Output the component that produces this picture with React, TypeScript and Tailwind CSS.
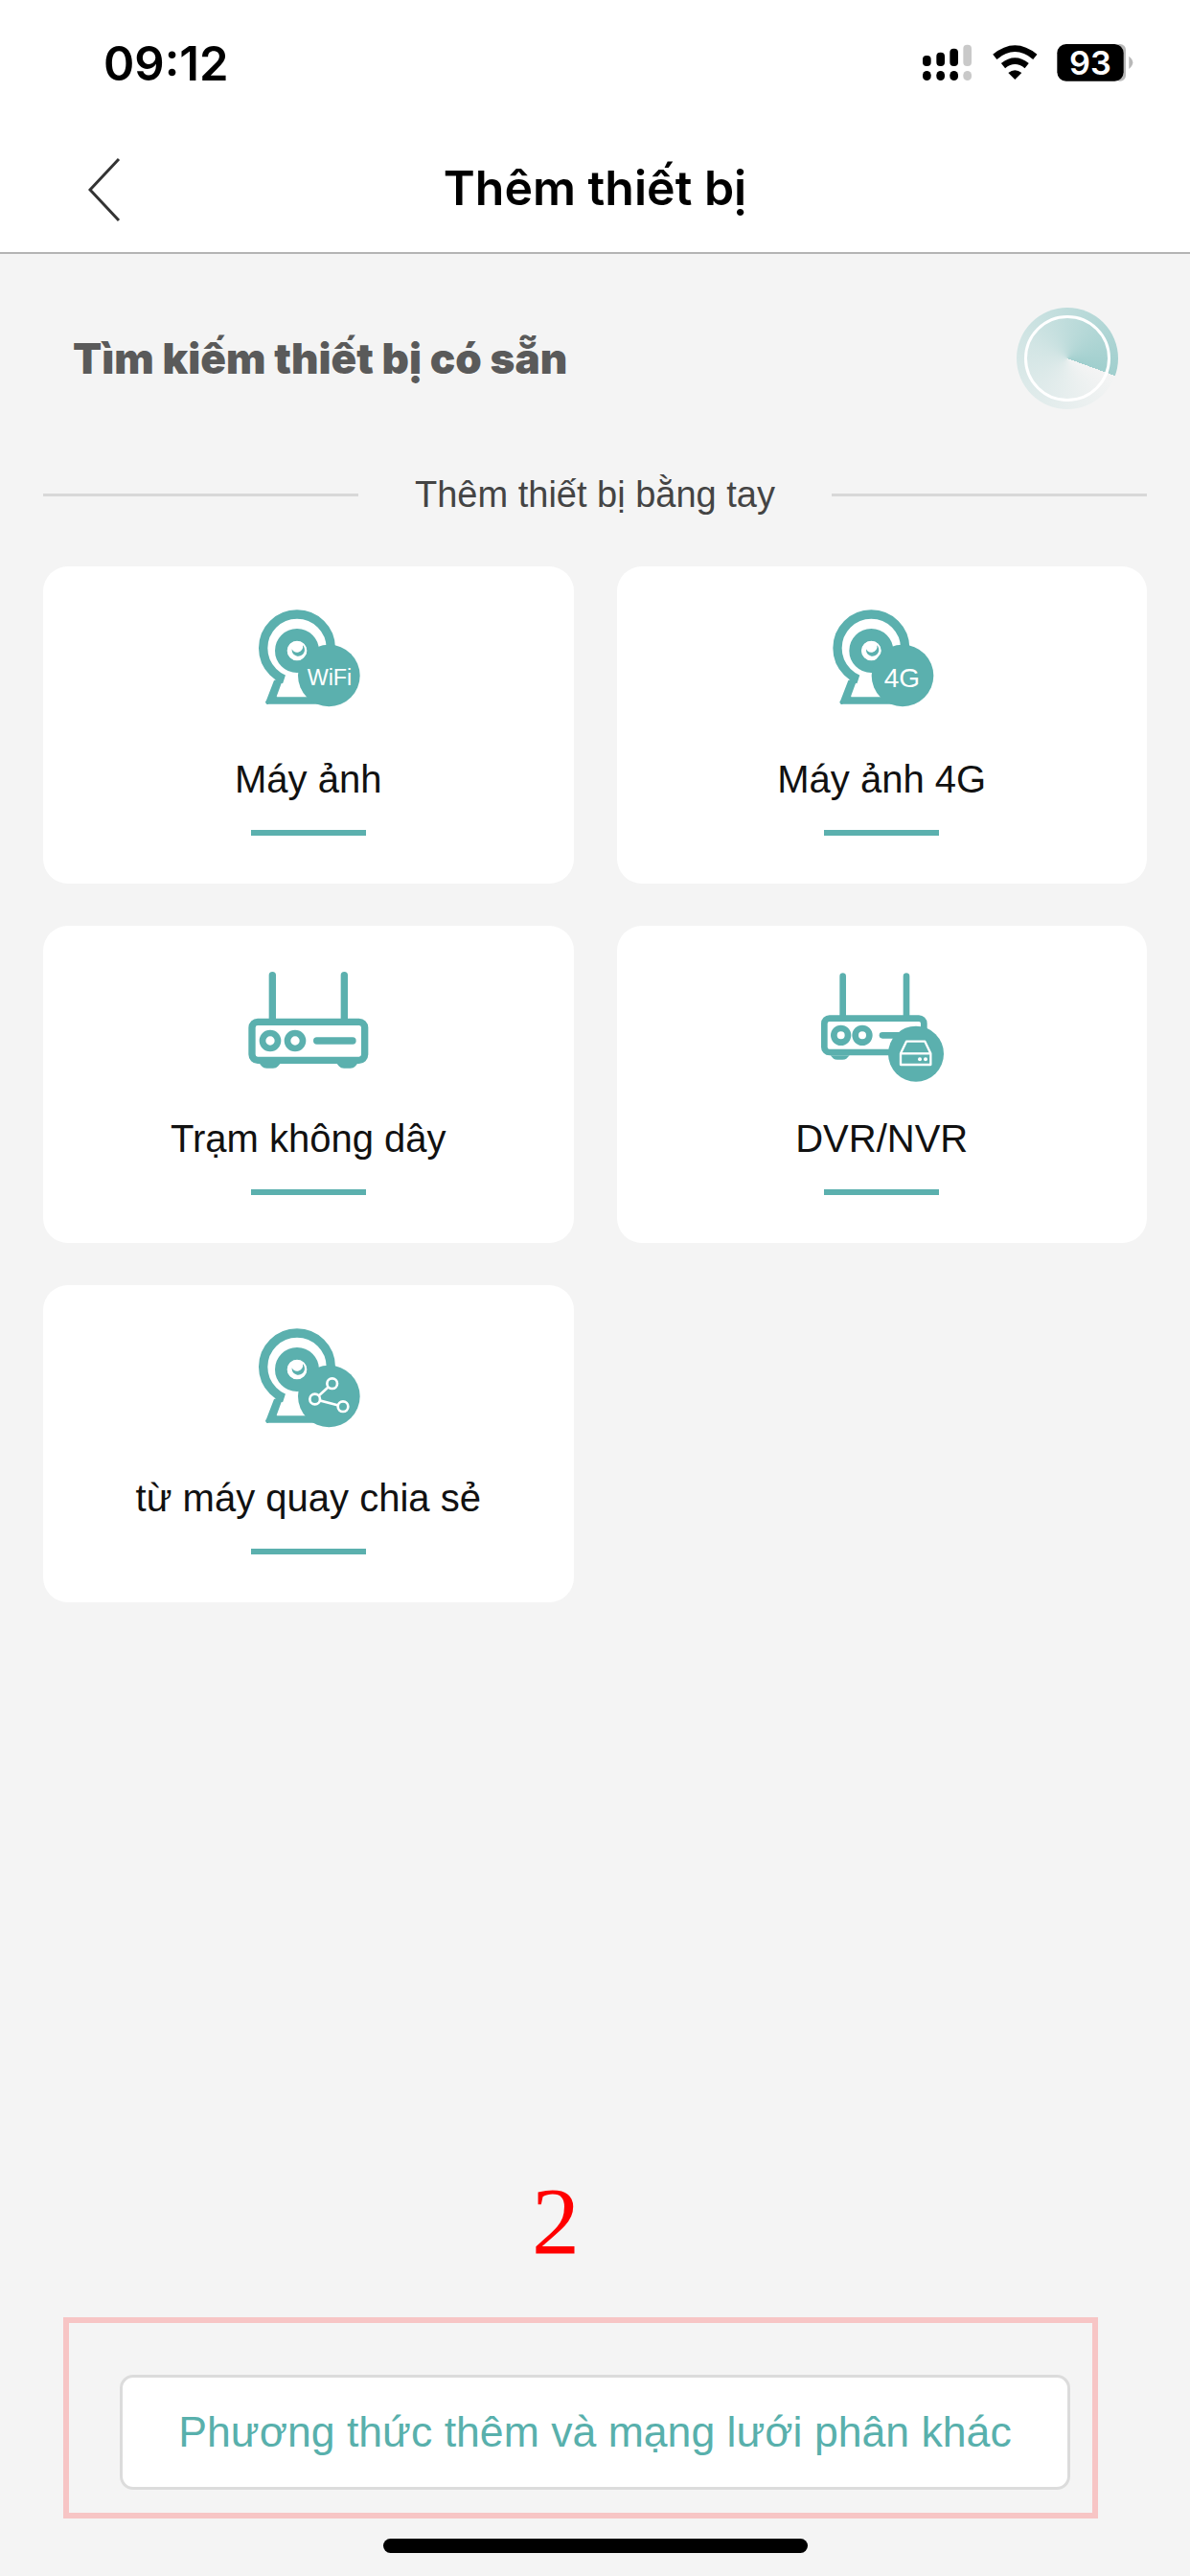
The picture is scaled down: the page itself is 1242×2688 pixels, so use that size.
import React from "react";

const TEAL = "#5bb0ae";

function Camera() {
  return (
    <g>
      <circle cx="240" cy="199" r="106" fill="none" stroke={TEAL} strokeWidth="28" />
      <circle cx="240" cy="207" r="50" fill="none" stroke={TEAL} strokeWidth="38" />
      <circle cx="240" cy="207" r="30" fill="#fff" />
      <path d="M224 202a20 20 0 1 0 34-12a18 18 0 0 1-15 22a18 18 0 0 1-19-10z" fill={TEAL} />
      <path d="M168 300L144 362a7 7 0 0 0 7 12H330V350H176L198 290z" fill={TEAL} />
      <path d="M205 280Q190 330 177 352H275L250 280z" fill="#fff" />
    </g>
  );
}

function Frame({ x, children }: { x: number; children: React.ReactNode }) {
  return (
    <svg width="200" height="150" viewBox={`${x} 0 600 450`} className="block">
      {children}
    </svg>
  );
}

function Badge({ cx = 340, cy = 285, r = 97 }: { cx?: number; cy?: number; r?: number }) {
  return <circle cx={cx} cy={cy} r={r} fill={TEAL} />;
}

function WifiIcon() {
  return (
    <Frame x={-24}>
      <Camera />
      <Badge />
      <text x="342" y="314" textAnchor="middle" fill="#fff" fontSize="70" fontFamily="'Liberation Sans', sans-serif">WiFi</text>
    </Frame>
  );
}

function FourGIcon() {
  return (
    <Frame x={-28}>
      <Camera />
      <Badge cx={338} />
      <text x="336" y="320" textAnchor="middle" fill="#fff" fontSize="84" fontFamily="'Liberation Sans', sans-serif">4G</text>
    </Frame>
  );
}

function ShareIcon() {
  return (
    <Frame x={-24}>
      <Camera />
      <Badge cy={291} />
      <path d="M350 251L296 300L384 323" fill="none" stroke="#fff" strokeWidth="8" />
      <circle cx="350" cy="251" r="16" fill={TEAL} stroke="#fff" strokeWidth="8" />
      <circle cx="296" cy="300" r="16" fill={TEAL} stroke="#fff" strokeWidth="8" />
      <circle cx="384" cy="323" r="16" fill={TEAL} stroke="#fff" strokeWidth="8" />
    </Frame>
  );
}

function RouterIcon() {
  return (
    <svg width="200" height="150" viewBox="-24 -21 600 450" className="block">
      <g fill="none" stroke={TEAL} strokeLinecap="round">
        <path d="M163 77V220M388 77V220" strokeWidth="22" />
        <rect x="99" y="223" width="353" height="120" rx="18" strokeWidth="22" />
        <circle cx="156" cy="282" r="24" strokeWidth="20" />
        <circle cx="234" cy="282" r="24" strokeWidth="20" />
        <path d="M302 282H414" strokeWidth="22" />
      </g>
      <path d="M120 350H190L180 362Q175 368 165 368H145Q135 368 130 362zM362 350H432L422 362Q417 368 407 368H387Q377 368 372 362z" fill={TEAL} />
    </svg>
  );
}

function DvrIcon() {
  return (
    <svg width="200" height="150" viewBox="-28 -21 600 450" className="block">
      <g fill="none" stroke={TEAL} strokeLinecap="round">
        <path d="M151 80V208M350 80V208" strokeWidth="20" />
        <rect x="93" y="212" width="312" height="106" rx="16" strokeWidth="20" />
        <circle cx="145" cy="265" r="22" strokeWidth="20" />
        <circle cx="212" cy="265" r="22" strokeWidth="20" />
        <path d="M275 265H340" strokeWidth="20" />
      </g>
      <path d="M112 328H172L162 338Q158 341 150 341H134Q126 341 122 338z" fill={TEAL} />
      <circle cx="380" cy="323" r="87" fill={TEAL} />
      <g fill="none" stroke="#fff" strokeWidth="7" strokeLinejoin="round">
        <path d="M332 322L350 284H408L426 322V357H332z" />
        <path d="M332 322H426" />
      </g>
      <circle cx="392" cy="340" r="6" fill="#fff" />
      <circle cx="410" cy="340" r="6" fill="#fff" />
    </svg>
  );
}

function StatusIcons() {
  return (
    <svg width="280" height="90" viewBox="0 0 840 270" className="block">
      <g fill="#000">
        <rect x="87" y="120" width="26" height="33" rx="12" />
        <rect x="130" y="110" width="26" height="43" rx="12" />
        <rect x="172" y="98" width="26" height="55" rx="12" />
        <rect x="87" y="168" width="26" height="30" rx="13" />
        <rect x="130" y="168" width="26" height="30" rx="13" />
        <rect x="172" y="168" width="26" height="30" rx="13" />
      </g>
      <rect x="214" y="86" width="26" height="67" rx="12" fill="#c9c9c9" />
      <rect x="214" y="168" width="26" height="30" rx="13" fill="#c9c9c9" />
      <g fill="none" stroke="#000" strokeWidth="20">
        <path d="M313 124Q376 72 439 124" />
        <path d="M339 152Q376 122 413 152" />
      </g>
      <path d="M376 195L355 174Q376 158 397 174z" fill="#000" />
      <path d="M700 84h5a18 18 0 0 1 18 18v80a18 18 0 0 1-18 18h-5z" fill="#b8b8b8" />
      <rect x="508" y="84" width="208" height="116" rx="28" fill="#000" />
      <path d="M733 122Q745 132 745 142Q745 152 733 162z" fill="#b8b8b8" />
      <text x="612" y="180" textAnchor="middle" fill="#fff" fontSize="103" fontWeight="600" fontFamily="Inter, sans-serif">93</text>
    </svg>
  );
}

function DeviceCard({ label, icon }: { label: string; icon: React.ReactNode }) {
  return (
    <div className="h-[331px] rounded-[26px] bg-white flex flex-col items-center pt-[19px]">
      {icon}
      <div className="mt-[23px] h-[60px] flex items-center text-[40px] text-[#111] font-['Liberation_Sans',sans-serif]">{label}</div>
      <div className="mt-[23px] h-[6px] w-[120px] bg-[#5bb0ae]" />
    </div>
  );
}

export default function App() {
  return (
    <div className="w-[1242px] h-[2688px] flex flex-col bg-[#f4f4f4]">
      <header className="h-[265px] bg-white border-b-2 border-[#b4b4b4] flex flex-col">
        <div className="h-[134px] flex items-center justify-between pl-[108px] pr-[28px]">
          <span className="text-[49px] font-semibold text-black font-['Inter',sans-serif]">09:12</span>
          <div className="mb-[8px]"><StatusIcons /></div>
        </div>
        <div className="relative flex-1 flex items-center justify-center pb-[4px]">
          <svg width="34" height="68" viewBox="0 0 34 68" className="absolute left-[92px] top-[30px]">
            <path d="M32 2L2 34L32 66" fill="none" stroke="#333" strokeWidth="3" />
          </svg>
          <span className="text-[50px] font-semibold text-black font-['Inter',sans-serif]">Thêm thiết bị</span>
        </div>
      </header>

      <div className="mt-[44px] h-[130px] flex items-center justify-between pl-[76px] pr-[75px]">
        <span className="text-[44px] font-black text-[#5a5a5a] font-['Inter',sans-serif]">Tìm kiếm thiết bị có sẵn</span>
        <div className="w-[106px] h-[106px] rounded-full flex items-center justify-center bg-[conic-gradient(from_110deg,rgba(91,176,174,0)_0deg,rgba(91,176,174,0.22)_180deg,rgba(91,176,174,0.55)_360deg)]">
          <div className="w-[90px] h-[90px] rounded-full border-[3px] border-white" />
        </div>
      </div>

      <div className="mt-[47px] mx-[45px] h-[60px] flex items-center justify-between">
        <div className="w-[329px] h-[3px] bg-[#d8d8d8]" />
        <span className="text-[38px] text-[#444] font-['Liberation_Sans',sans-serif]">Thêm thiết bị bằng tay</span>
        <div className="w-[329px] h-[3px] bg-[#d8d8d8]" />
      </div>

      <div className="mt-[45px] mx-[45px] grid grid-cols-2 gap-x-[45px] gap-y-[44px]">
        <DeviceCard label="Máy ảnh" icon={<WifiIcon />} />
        <DeviceCard label="Máy ảnh 4G" icon={<FourGIcon />} />
        <DeviceCard label="Trạm không dây" icon={<RouterIcon />} />
        <DeviceCard label="DVR/NVR" icon={<DvrIcon />} />
        <DeviceCard label="từ máy quay chia sẻ" icon={<ShareIcon />} />
      </div>

      <div className="mt-auto ml-[555px] text-[100px] leading-[100px] text-[#f00] font-['Liberation_Serif',serif]">2</div>
      <div className="mt-[50px] ml-[66px] w-[1080px] h-[210px] border-[6px] border-[#f7c5c5] pl-[53px] pt-[54px]">
        <div className="w-[992px] h-[120px] rounded-[14px] border-[3px] border-[#dcdcdc] bg-white flex items-center justify-center">
          <span className="text-[44.6px] text-[#58b0ac] font-['Liberation_Sans',sans-serif]">Phương thức thêm và mạng lưới phân khác</span>
        </div>
      </div>
      <div className="mt-[21px] mb-[24px] ml-[400px] w-[443px] h-[15px] rounded-full bg-black" />
    </div>
  );
}
